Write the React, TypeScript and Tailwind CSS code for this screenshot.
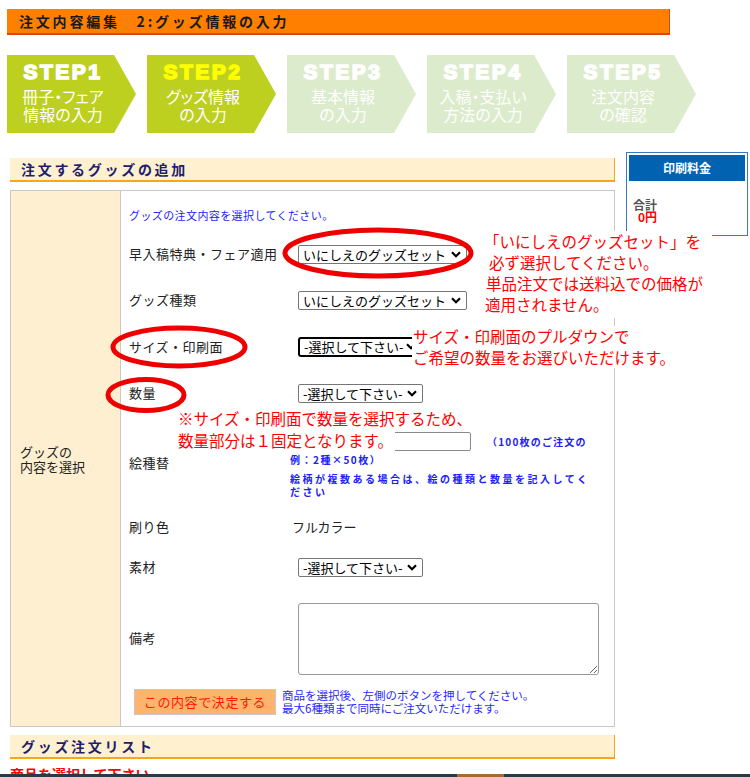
import React from 'react';

const jp = "font-['Noto_Sans_CJK_JP',sans-serif]";

const steps = [
  { label: 'STEP1', lines: ['冊子・フェア', '情報の入力'], on: true },
  { label: 'STEP2', lines: ['グッズ情報', 'の入力'], on: true, current: true },
  { label: 'STEP3', lines: ['基本情報', 'の入力'], on: false },
  { label: 'STEP4', lines: ['入稿・支払い', '方法の入力'], on: false },
  { label: 'STEP5', lines: ['注文内容', 'の確認'], on: false },
];

function Chevron() {
  return (
    <svg width="10" height="7" viewBox="0 0 10 7" className="shrink-0">
      <path d="M1 1.2 L5 5.2 L9 1.2" fill="none" stroke="#000" strokeWidth="2.2" />
    </svg>
  );
}

function Select({ value, wide, strong }: { value: string; wide?: boolean; strong?: boolean }) {
  return (
    <div
      className={`flex items-center justify-between bg-white text-[13px] leading-none text-black pl-[4px] pr-[5px] ${
        wide ? 'w-[169px]' : 'w-[125px]'
      } ${strong ? 'h-[20px] border-2 border-black rounded-[3px]' : 'h-[19px] border border-[#767676] rounded-[2px]'}`}
    >
      <span className="whitespace-nowrap">{value}</span>
      <Chevron />
    </div>
  );
}

function Row({ label, h, children }: { label: string; h: string; children?: React.ReactNode }) {
  return (
    <div className={`flex items-center ${h}`}>
      <div className="w-[169px] text-[13px] tracking-[0.5px] text-[#222]">{label}</div>
      {children}
    </div>
  );
}

function SectionHead({ title }: { title: string }) {
  return (
    <div className="h-[24px] bg-[#fff1cf] border-b-2 border-r border-[#f6a619] pl-[11px] flex items-center">
      <span className="text-[14px] font-bold tracking-[2.7px] text-[#1e1e6e]">{title}</span>
    </div>
  );
}

export default function App() {
  return (
    <div className={`relative w-[750px] min-h-[800px] bg-white pt-[9px] ${jp}`}>
      {/* title bar */}
      <div className="ml-[7px] w-[663px] h-[26px] bg-[#ff8000] border-b-2 border-r border-[#d8461a] pl-[12px] flex items-center">
        <span className="text-[14px] font-bold tracking-[2.8px] text-[#1a1a1a]">注文内容編集　2:グッズ情報の入力</span>
      </div>

      {/* steps */}
      <div className="ml-[7px] mt-[20px] flex gap-[11px]">
        {steps.map((s) => (
          <div
            key={s.label}
            className={`w-[129px] h-[78px] [clip-path:polygon(0_0,83%_0,100%_50%,83%_100%,0_100%)] ${
              s.on ? 'bg-[#bdcf1f]' : 'bg-[#dbebcb]'
            }`}
          >
            <div className="w-[112px] flex flex-col items-center pt-[7px]">
              <span
                className={`font-['Liberation_Sans',Arial,sans-serif] font-black text-[21px] leading-[20px] tracking-[2.5px] ${
                  s.current ? 'text-[#ffff00] [-webkit-text-stroke:1.6px_#ffff00]' : 'text-white [-webkit-text-stroke:1.6px_white]'
                }`}
              >
                {s.label}
              </span>
              <div className="mt-[5px] text-white text-[16px] leading-[18px] text-center [font-feature-settings:'palt']">
                <div>{s.lines[0]}</div>
                <div>{s.lines[1]}</div>
              </div>
            </div>
          </div>
        ))}
      </div>

      <div className="flex items-start">
        {/* main column */}
        <div className="ml-[10px] w-[605px] mt-[25px]">
          <SectionHead title="注文するグッズの追加" />

          <div className="mt-[8px] flex border border-[#c8c8c8]">
            <div className="w-[110px] bg-[#fdefd0] border-r border-[#c8c8c8] flex items-center pl-[9px]">
              <div className="text-[13px] leading-[15px] text-[#222]">
                グッズの
                <br />
                内容を選択
              </div>
            </div>

            <div className="flex-1 pl-[8px] pt-[14px] pb-[8px]">
              <div className="h-[20px] flex items-center text-[11px] tracking-[0.4px] text-[#2323ff]">
                グッズの注文内容を選択してください。
              </div>
              <div className="mt-[6px]">
                <Row label="早入稿特典・フェア適用" h="h-[46px]">
                  <Select value="いにしえのグッズセット" wide />
                </Row>
                <Row label="グッズ種類" h="h-[46px]">
                  <Select value="いにしえのグッズセット" wide />
                </Row>
                <Row label="サイズ・印刷面" h="h-[47px]">
                  <Select value="-選択して下さい-" strong />
                </Row>
                <Row label="数量" h="h-[46px]">
                  <Select value="-選択して下さい-" />
                </Row>
                <div className="flex items-center h-[94px]">
                  <div className="w-[169px] text-[13px] tracking-[0.5px] text-[#222]">絵種替</div>
                  <div className="self-start pt-[16px] ml-[-8px] text-[10px] font-bold text-[#2020ff]">
                    <div className="flex items-center">
                      <div className="w-[181px] h-[19px] border border-[#8a8a8a] rounded-[2px] bg-white" />
                      <span className="ml-[16px] tracking-[1.2px] leading-[14px]">（100枚のご注文の</span>
                    </div>
                    <div className="mt-[2px] leading-[14px] tracking-[1.5px]">例：2種×50枚）</div>
                    <div className="mt-[5px] leading-[13px] tracking-[2.5px]">
                      絵柄が複数ある場合は、絵の種類と数量を記入してく
                      <br />
                      ださい
                    </div>
                  </div>
                </div>
                <div className="flex items-center h-[34px]">
                  <div className="w-[169px] text-[13px] tracking-[0.5px] text-[#222]">刷り色</div>
                  <span className="ml-[-6px] text-[13px] text-[#222]">フルカラー</span>
                </div>
                <Row label="素材" h="h-[46px]">
                  <Select value="-選択して下さい-" />
                </Row>
                <Row label="備考" h="h-[96px]">
                  <textarea className="w-[301px] h-[72px] mt-[2px] border border-[#999] rounded-[3px] bg-white" />
                </Row>
                <div className="flex items-center h-[32px]">
                  <button className="ml-[5px] w-[142px] h-[26px] bg-[#ffb46e] border border-[#c8c8c8] text-[#ff1a00] text-[13px] tracking-[0.6px]">
                    この内容で決定する
                  </button>
                  <div className="ml-[6px] text-[11.5px] leading-[13px] text-[#2a2aff]">
                    商品を選択後、左側のボタンを押してください。
                    <br />
                    最大6種類まで同時にご注文いただけます。
                  </div>
                </div>
              </div>
            </div>
          </div>

          <div className="mt-[8px]">
            <SectionHead title="グッズ注文リスト" />
          </div>
          <div className="mt-[7px] text-[14px] leading-[16px] font-bold text-[#ff0000]">商品を選択して下さい</div>
        </div>

        {/* price box */}
        <div className="ml-[11px] mt-[19px] w-[122px] border border-[#3b78c2] p-[2px] pb-[12px]">
          <div className="h-[26px] bg-[#0062b0] flex items-center justify-center text-white text-[12px] font-bold">
            印刷料金
          </div>
          <div className="pt-[18px] pl-[4px] text-[12px] leading-[12px] font-bold text-[#555]">合計</div>
          <div className="pl-[9px] text-[12px] leading-[12px] font-bold text-[#ff0000]">0円</div>
        </div>
      </div>

      {/* red annotations */}
      <div className="absolute left-[484px] top-[231px] w-[228px] h-[87px] bg-white text-[15.5px] leading-[21px] text-[#ff0000]">
        <div>「いにしえのグッズセット」を</div>
        <div className="pl-[5px]">必ず選択してください。</div>
        <div className="pl-[2px]">単品注文では送料込での価格が</div>
        <div className="pl-[1px]">適用されません。</div>
      </div>
      <div className="absolute left-[412px] top-[326px] w-[271px] bg-white pl-[1px] text-[15.5px] leading-[21px] text-[#ff0000]">
        <div>サイズ・印刷面のプルダウンで</div>
        <div>ご希望の数量をお選びいただけます。</div>
      </div>
      <div className="absolute left-[176px] top-[407px] text-[15.5px] leading-[22px] text-[#ff0000]">
        <span className="bg-white pl-[2px] pr-[2px]">※サイズ・印刷面で数量を選択するため、</span>
        <br />
        <span className="bg-white pl-[2px] pr-[2px]">数量部分は１固定となります。</span>
      </div>

      <svg className="absolute left-0 top-0 pointer-events-none" width="750" height="800">
        <ellipse cx="378" cy="253" rx="93" ry="23" fill="none" stroke="#ee0000" strokeWidth="5" />
        <ellipse cx="179" cy="347" rx="66" ry="19" fill="none" stroke="#ee0000" strokeWidth="5" />
        <ellipse cx="146" cy="395" rx="38" ry="15.5" fill="none" stroke="#ee0000" strokeWidth="5" />
      </svg>

      {/* bottom bar */}
      <div className="fixed left-0 right-0 bottom-0 h-[3px] bg-[#2b3a42]">
        <div className="ml-[457px] w-[47px] h-[3px] bg-[#a86a34]" />
      </div>
    </div>
  );
}
